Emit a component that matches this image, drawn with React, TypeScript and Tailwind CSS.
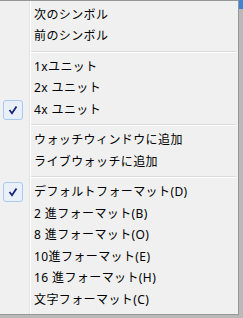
import { Fragment } from 'react';

type Item = { label: string; checked?: boolean } | 'sep';

const items: Item[] = [
  { label: '次のシンボル' },
  { label: '前のシンボル' },
  'sep',
  { label: '1xユニット' },
  { label: '2x ユニット' },
  { label: '4x ユニット', checked: true },
  'sep',
  { label: 'ウォッチウィンドウに追加' },
  { label: 'ライブウォッチに追加' },
  'sep',
  { label: 'デフォルトフォーマット(D)', checked: true },
  { label: '2 進フォーマット(B)' },
  { label: '8 進フォーマット(O)' },
  { label: '10進フォーマット(E)' },
  { label: '16 進フォーマット(H)' },
  { label: '文字フォーマット(C)' },
];

function Check() {
  return (
    <div className="w-[20px] h-[20px] ml-[3px] rounded-[3px] border border-[#a8c9f2] bg-[#eaf0f9] flex items-center justify-center">
      <svg width="10" height="10" viewBox="0 0 10 10">
        <path d="M1.5 5 L4 8.2 L8.5 1.5" fill="none" stroke="#18237a" strokeWidth="1.8" />
      </svg>
    </div>
  );
}

export default function App() {
  return (
    <div className="w-[243px] h-[318px] bg-[#b9b9b9] overflow-hidden relative">
      <div className="absolute right-0 top-0 w-[5px] h-[9px] bg-[#3b84d6]" />
      <div
        className="w-[239px] h-[315px] bg-[#f0f0f0] border-t border-r border-b border-[#979797] text-[12px] tracking-[0.4px] text-black pt-[3px] relative"
        style={{ fontFamily: '"Noto Sans", "Noto Sans CJK JP", sans-serif' }}
      >
        {/* icon gutter line */}
        <div className="absolute top-0 bottom-0 left-[29px] w-[2px] border-l border-[#e2e3e3] border-r-white border-r" />
        {items.map((it, i) => (
          <Fragment key={i}>
            {it === 'sep' ? (
              <div className="h-[9px] flex items-center pl-[31px] pr-[2px]">
                <div className="w-full h-[2px] border-t border-[#dcdcdc] border-b border-b-white" />
              </div>
            ) : (
              <div className="h-[21.5px] flex items-center">
                <div className="w-[34px] shrink-0">{it.checked && <Check />}</div>
                <span className="leading-none">{it.label}</span>
              </div>
            )}
          </Fragment>
        ))}
      </div>
    </div>
  );
}
